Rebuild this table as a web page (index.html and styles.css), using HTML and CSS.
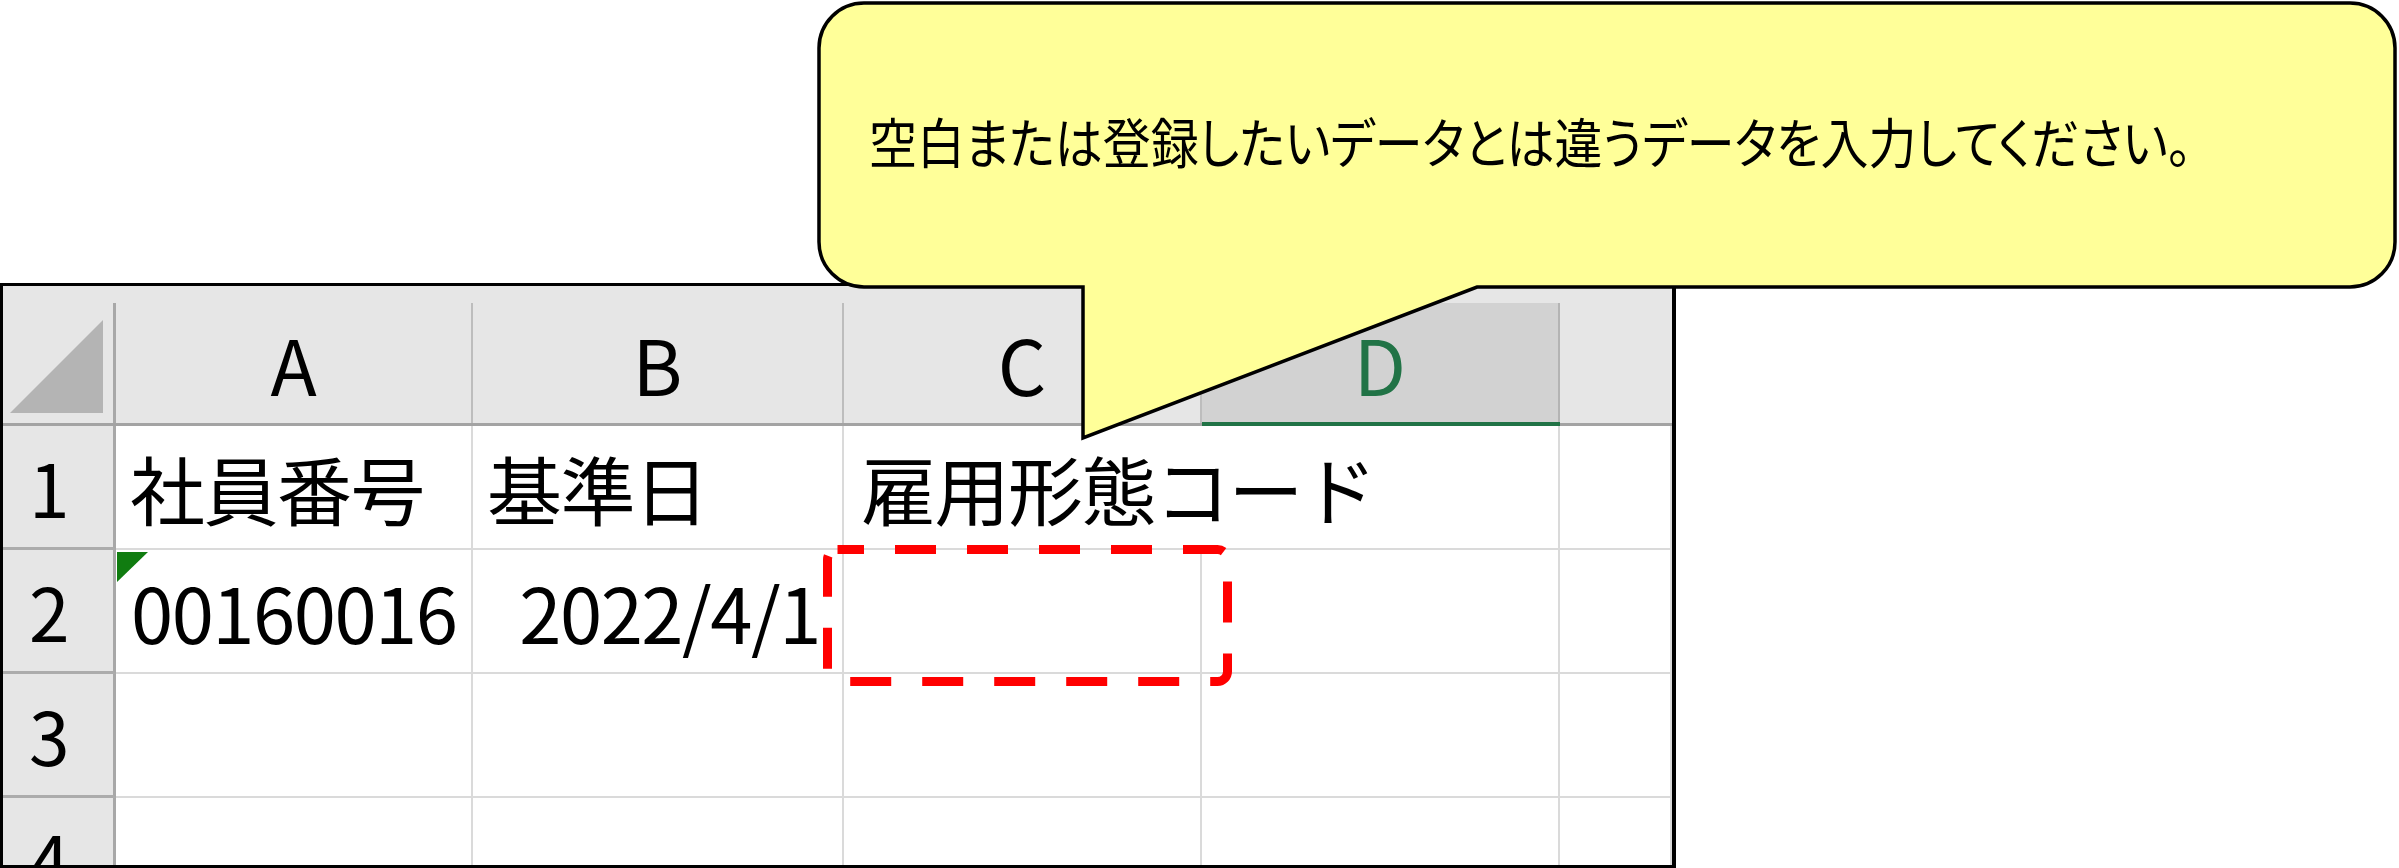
FILE: index.html
```html
<!DOCTYPE html>
<html lang="ja">
<head>
<meta charset="utf-8">
<title>Excel</title>
<link rel="stylesheet" href="styles.css">
</head>
<body>
<div class="page">
  <div class="sheet">
    <div class="grid">
      <div class="hdr corner"><div class="hin"><svg class="tri" width="111" height="120" viewBox="0 0 111 120"><polygon points="7,110 100,17 100,110" fill="#b4b4b4"/></svg></div></div>
      <div class="hdr"><div class="hin">A</div></div>
      <div class="hdr"><div class="hin">B</div></div>
      <div class="hdr"><div class="hin">C</div></div>
      <div class="hdr sel"><div class="hin">D</div></div>
      <div class="hdr"><div class="hin last"></div></div>

      <div class="rh">1</div>
      <div class="cell jp">社員番号</div>
      <div class="cell jp">基準日</div>
      <div class="cell jp nogrid">雇用形態コード</div>
      <div class="cell"></div>
      <div class="cell"></div>

      <div class="rh">2</div>
      <div class="cell digits"><span class="flag"></span>00160016</div>
      <div class="cell digits right">2022/4/1</div>
      <div class="cell"></div>
      <div class="cell"></div>
      <div class="cell"></div>

      <div class="rh">3</div>
      <div class="cell"></div>
      <div class="cell"></div>
      <div class="cell"></div>
      <div class="cell"></div>
      <div class="cell"></div>

      <div class="rh">4</div>
      <div class="cell"></div>
      <div class="cell"></div>
      <div class="cell"></div>
      <div class="cell"></div>
      <div class="cell"></div>
    </div>
  </div>

  <svg class="dash" width="410" height="142" viewBox="0 0 410 142">
    <rect x="4.5" y="4.5" width="400" height="132" rx="10" ry="10" fill="none" stroke="#ff0000" stroke-width="9" stroke-dasharray="41 31" stroke-dashoffset="14.5"/>
  </svg>

  <div class="bubble">
    <svg class="bubble-shape" width="1583" height="442" viewBox="0 0 1583 442">
      <path d="M 48,3 H 1534 A 45 45 0 0 1 1579,48 V 242 A 45 45 0 0 1 1534,287 H 661 L 267,438 V 287 H 48 A 45 45 0 0 1 3,242 V 48 A 45 45 0 0 1 48,3 Z" fill="#ffff99" stroke="#000" stroke-width="3.5" stroke-linejoin="miter"/>
    </svg>
    <div class="bubble-body"><span class="btext">空白または登録したいデータとは違うデータを入力してください。</span></div>
  </div>
</div>
</body>
</html>
```
FILE: styles.css
```css
* { box-sizing: border-box; margin: 0; padding: 0; }
html, body { width: 2399px; height: 868px; overflow: hidden; background: #fff; }
body { font-family: "Noto Sans CJK JP", "Noto Sans", sans-serif; color: #000; }

.page { position: relative; width: 2399px; height: 868px; padding-top: 283px; }

.sheet {
  width: 1676px;
  height: 585px;
  border: 3px solid #000;
  border-right-width: 4px;
  overflow: hidden;
  background: #fff;
}

.grid {
  display: grid;
  grid-template-columns: 113px 357px 371px 358px 358px 1fr;
  grid-template-rows: 140px 124px 124px 124px 124px;
}

.hdr {
  background: #e6e6e6;
  border-bottom: 3px solid #a3a3a3;
  padding-top: 17px;
}
.hin {
  height: 100%;
  border-right: 2px solid #bdbdbd;
  display: flex;
  align-items: center;
  justify-content: center;
  font-size: 76px;
  line-height: 1;
}
.hin.last { border-right: none; }
.hdr.sel { border-bottom: 4px solid #217346; }
.hdr.sel .hin { background: #d2d2d2; color: #217346; border-right-color: #b4b4b4; }
.corner .hin { border-right: 3px solid #a8a8a8; display: block; }
.tri { display: block; }

.rh {
  background: #e6e6e6;
  border-right: 3px solid #a8a8a8;
  border-bottom: 3px solid #acacac;
  display: flex;
  align-items: center;
  padding-left: 26px;
  font-size: 73px;
  line-height: 1;
}

.cell {
  position: relative;
  border-right: 2px solid #dadada;
  border-bottom: 2px solid #dadada;
  display: flex;
  align-items: center;
  padding-left: 14px;
  white-space: nowrap;
  line-height: 1;
}
.cell.nogrid { border-right-color: transparent; padding-left: 17px; }
.cell.jp { font-size: 75px; letter-spacing: -1.5px; }
.cell.digits { font-size: 76px; letter-spacing: -1.5px; padding-left: 15px; }
.cell.right { justify-content: flex-end; padding-left: 0; padding-right: 22px; }

.flag {
  position: absolute;
  left: 1px;
  top: 2px;
  width: 0;
  height: 0;
  border-top: 30px solid #107c10;
  border-right: 31px solid transparent;
}

.dash {
  position: absolute;
  left: 823px;
  top: 545px;
}

.bubble {
  position: absolute;
  left: 816px;
  top: 0;
  width: 1583px;
  height: 442px;
}
.bubble-shape {
  position: absolute;
  left: 0;
  top: 0;
}
.bubble-body {
  position: relative;
  height: 282px;
  display: flex;
  align-items: center;
  padding-left: 53px;
}
.btext {
  display: inline-block;
  font-size: 54px;
  line-height: 1;
  font-feature-settings: "palt";
  white-space: nowrap;
  transform: scaleX(0.888);
  transform-origin: left center;
}
```
